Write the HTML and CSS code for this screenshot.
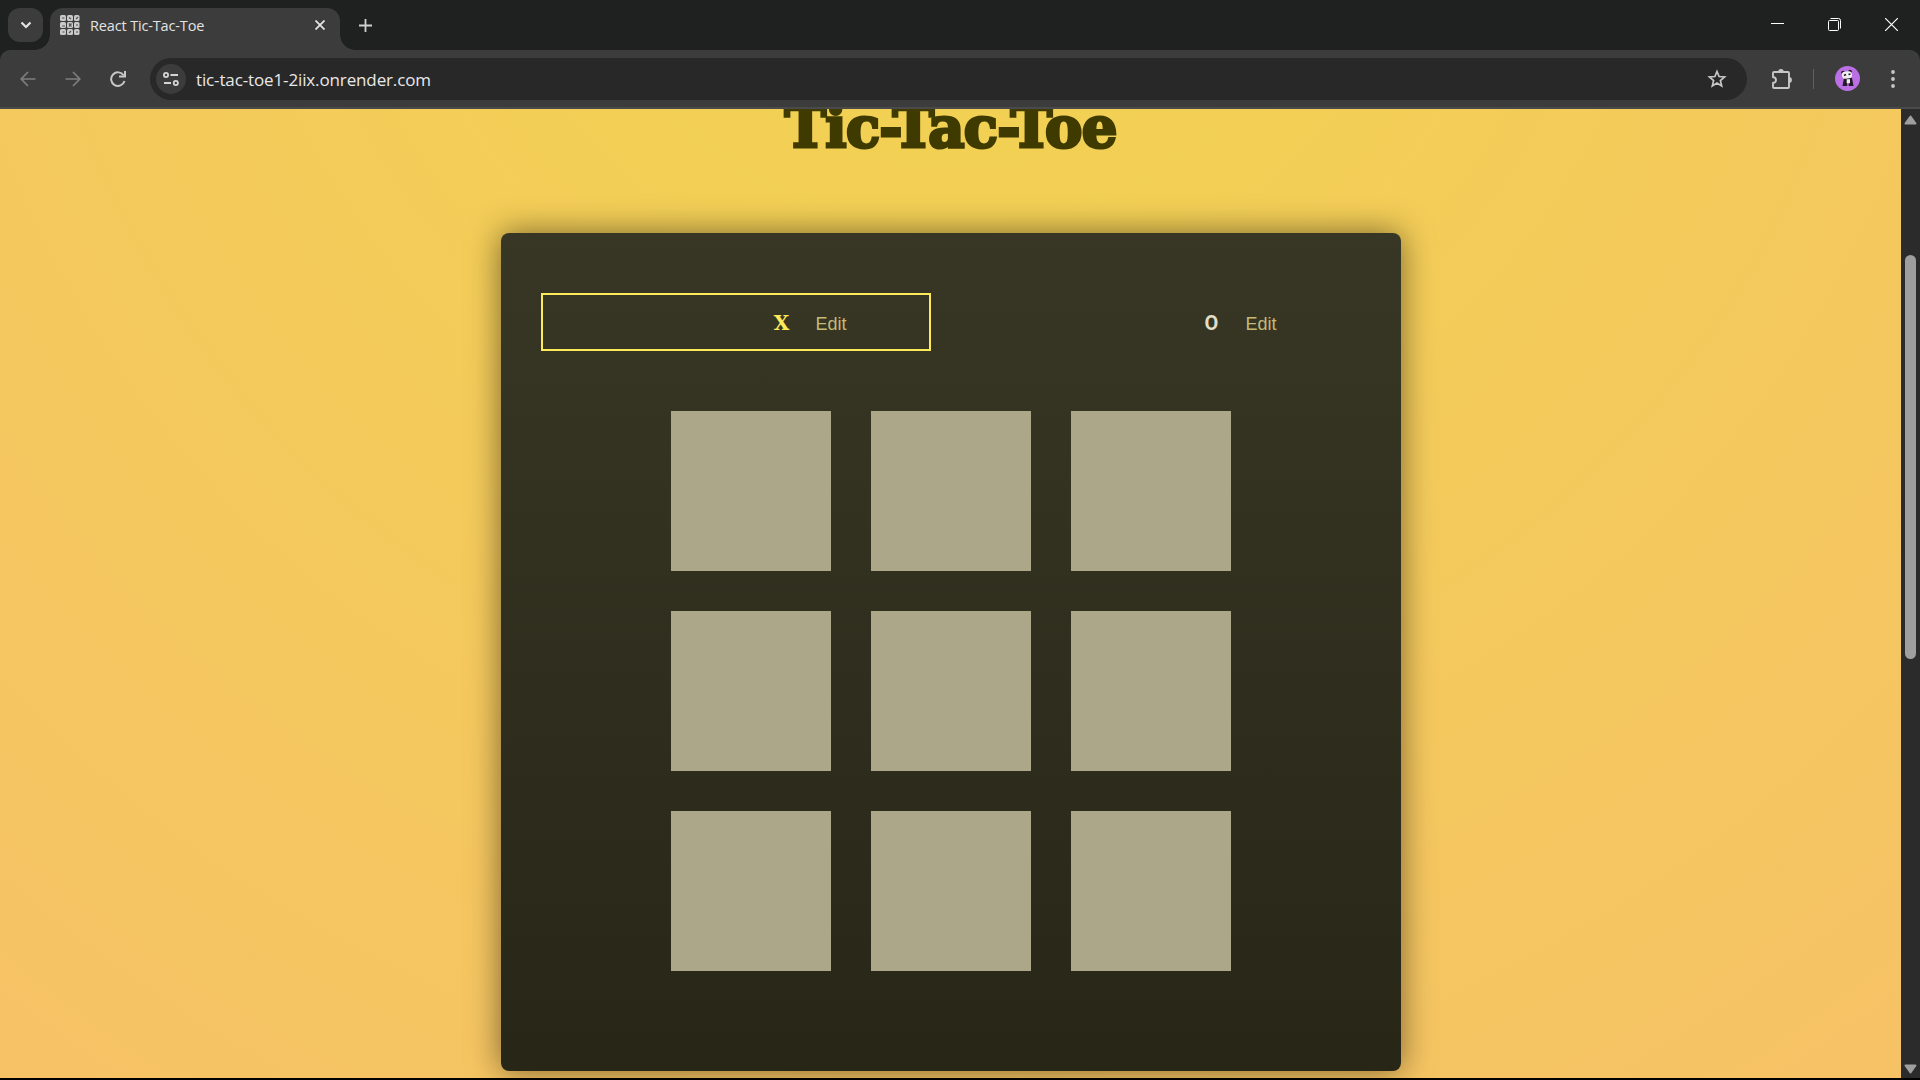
FILE: index.html
```html
<!DOCTYPE html>
<html lang="en">
<head>
<meta charset="utf-8">
<title>React Tic-Tac-Toe</title>
<link rel="stylesheet" href="styles.css">
</head>
<body>
<div class="browser">
  <header class="tabs">
    <button class="tab-search" aria-label="Search tabs"><svg width="12" height="8" viewBox="0 0 12 8"><path d="M1.500 1.500 6 6l4.500-4.500" stroke="#e3e3e3" stroke-width="2.200" fill="none"/></svg></button>
    <div class="tab">
      <svg class="favicon" width="20" height="20" viewBox="0 0 20 20">
        <g fill="#c9c9c9"><rect x="0" y="0" width="6" height="6" rx="1.500"/><rect x="7" y="0" width="6" height="6" rx="1.500"/><rect x="14" y="0" width="5.500" height="6" rx="1.500"/><rect x="0" y="7" width="6" height="6" rx="1.500"/><rect x="7" y="7" width="6" height="6" rx="1.500"/><rect x="14" y="7" width="5.500" height="6" rx="1.500"/><rect x="0" y="14" width="6" height="6" rx="1.500"/><rect x="7" y="14" width="6" height="6" rx="1.500"/><rect x="14" y="14" width="5.500" height="6" rx="1.500"/></g>
        <path d="M2 3h2.500M9 2.500l2 1.500M16 4l2-2M2 11h3M9 8.500l2.500 3m0-3-2.500 3M16 10h2M2.500 17h2M9 18l2-2M16 17h2" stroke="#555" stroke-width="1.200"/>
      </svg>
      <span class="tab-title">React Tic-Tac-Toe</span>
      <svg class="tab-close" width="10" height="10" viewBox="0 0 10 10"><path d="m.5.5 9 9m0-9-9 9" stroke="#e3e3e3" stroke-width="1.800"/></svg>
    </div>
    <svg class="new-tab" width="13" height="13" viewBox="0 0 13 13"><path d="M6.500 0v13M0 6.500h13" stroke="#d0d0d0" stroke-width="1.800"/></svg>
    <div class="window-controls">
      <svg width="13" height="13" viewBox="0 0 13 13"><path d="M0 5.500h13" stroke="#fff"/></svg>
      <svg width="13" height="13" viewBox="0 0 13 13" fill="none" stroke="#fff"><path d="M2.500.5h8a2 2 0 0 1 2 2v8"/><rect x=".5" y="2.500" width="10" height="10" rx="1"/></svg>
      <svg width="13" height="13" viewBox="0 0 13 13"><path d="m0 0 13 13M13 0 0 13" stroke="#fff" stroke-width="1.200"/></svg>
    </div>
  </header>
  <nav class="toolbar">
    <svg class="back" width="16" height="16" viewBox="0 0 16 16" fill="none" stroke="#7e7e7e" stroke-width="1.700"><path d="M15.500 8H1.500M8 1 1.200 8 8 15"/></svg>
    <svg class="forward" width="16" height="16" viewBox="0 0 16 16" fill="none" stroke="#7e7e7e" stroke-width="1.700"><path d="M.5 8h14M8 1l6.800 7L8 15"/></svg>
    <svg class="reload" width="16" height="16" viewBox="0 0 16 16" fill="none" stroke="#c7c7c7" stroke-width="2"><path d="M14.500 10a6.800 6.800 0 1 1-.8-5.500"/><path d="M15 0v5.500H9"/></svg>
    <div class="address">
      <span class="site-info"><svg width="16" height="14" viewBox="0 0 16 14" fill="none" stroke="#d5d5d5" stroke-width="1.800"><circle cx="3" cy="3" r="2.100"/><path d="M7.500 3H15M1 11h7"/><circle cx="12.800" cy="11" r="2.100"/></svg></span>
      <span class="url">tic-tac-toe1-2iix.onrender.com</span>
      <svg class="star" width="20" height="20" viewBox="0 0 20 20" fill="none" stroke="#c7c7c7" stroke-width="1.700"><path d="m10 2.500 2.100 5 5.500.5-4.200 3.600 1.300 5.400L10 14.100 5.300 17l1.300-5.400L2.400 8l5.500-.5z"/></svg>
    </div>
    <svg class="extensions" width="22" height="22" viewBox="0 0 22 22"><path d="M3 4h14a1 1 0 0 1 1 1v14a1 1 0 0 1-1 1H3a1 1 0 0 1-1-1v-4c4-.5 4-5.500 0-6V5a1 1 0 0 1 1-1z" fill="none" stroke="#c7c7c7" stroke-width="1.900"/><path d="M7 4a2.900 2.900 0 0 1 5.800 0M18 9a2.900 2.900 0 0 1 0 5.800" fill="#c7c7c7"/></svg>
    <span class="divider"></span>
    <svg class="avatar" width="25" height="25" viewBox="0 0 25 25"><circle cx="12.500" cy="12.500" r="12.500" fill="#ba70e4"/><g fill="#221a26"><circle cx="8" cy="6.500" r="1.800"/><circle cx="15" cy="5.500" r="1.800"/><path d="M9 12h8l1.500 8h-4.800v-4h-1.500v4H7.500z"/></g><rect x="7" y="5.500" width="10" height="7" rx="3" fill="#f2eff2" transform="rotate(-8 12 9)"/><path d="m9 9.500 2-1m2.500 0 2-.5" stroke="#221a26" stroke-width="1.400"/><rect x="11.700" y="13.200" width="3.300" height="4" fill="#eee"/></svg>
    <svg class="menu" width="4" height="18" viewBox="0 0 4 18" fill="#c7c7c7"><circle cx="2" cy="2" r="1.900"/><circle cx="2" cy="9" r="1.900"/><circle cx="2" cy="16" r="1.900"/></svg>
  </nav>
  <div class="viewport">
    <main class="page">
      <h1 class="title"><span class="title-text">Tic-Tac-Toe</span></h1>
      <section class="game">
        <ol class="players">
          <li class="player active"><span class="symbol cross">X</span><button class="edit">Edit</button></li>
          <li class="player"><span class="symbol nought">O</span><button class="edit">Edit</button></li>
        </ol>
        <div class="board">
          <button class="square"></button><button class="square"></button><button class="square"></button>
          <button class="square"></button><button class="square"></button><button class="square"></button>
          <button class="square"></button><button class="square"></button><button class="square"></button>
        </div>
      </section>
    </main>
    <aside class="scrollbar">
      <svg width="13" height="10" viewBox="0 0 13 10"><path d="M6.500 1.500 11.500 8.500h-10z" fill="#9f9f9f" stroke="#9f9f9f" stroke-width="2" stroke-linejoin="round"/></svg>
      <span class="thumb"></span>
      <svg class="down" width="13" height="10" viewBox="0 0 13 10"><path d="M6.500 8.500 11.500 1.500h-10z" fill="#9f9f9f" stroke="#9f9f9f" stroke-width="2" stroke-linejoin="round"/></svg>
    </aside>
  </div>
</div>
</body>
</html>
```
FILE: styles.css
```css
* { box-sizing: border-box; }
body { margin: 0; background: #000; overflow: hidden; }
svg { display: block; flex: none; }
button { border: 0; padding: 0; background: none; }
.browser { width: 1920px; height: 1080px; display: flex; flex-direction: column; border-bottom: 2px solid #000; font-family: "Open Sans", "Noto Sans", sans-serif; background: #1f2120; }

.tabs { height: 50px; flex: none; display: flex; padding-left: 8px; }
.tab-search { width: 35px; height: 34px; margin: 8px 7px 0 0; border-radius: 12px; background: #3c3c3c; display: grid; place-items: center; }
.tab { position: relative; width: 290px; height: 42px; margin-top: 8px; padding: 0 15px 8px 10px; border-radius: 13px 13px 0 0; background: #3c3c3c; display: flex; align-items: center; }
.tab::before, .tab::after { content: ""; position: absolute; bottom: 0; width: 15px; height: 15px; }
.tab::before { left: -15px; background: radial-gradient(circle at 0 0, transparent 14.5px, #3c3c3c 15px); }
.tab::after { right: -15px; background: radial-gradient(circle at 100% 0, transparent 14.5px, #3c3c3c 15px); }
.tab-title { margin-left: 10px; color: #e3e3e3; font-size: 14.5px; letter-spacing: -0.15px; white-space: nowrap; }
.tab-close { margin-left: auto; }
.new-tab { margin: 19px 0 0 19px; }
.window-controls { margin: 18px 22px 0 auto; display: flex; gap: 44px; }

.toolbar { height: 59px; flex: none; display: flex; align-items: center; padding: 0 25px 0 20px; background: #3c3c3c; border-bottom: 2px solid #4a4a4a; border-radius: 10px 10px 0 0; }
.forward { margin-left: 29px; }
.reload { margin-left: 29px; }
.address { width: 1597px; height: 42px; margin-left: 24px; padding: 0 20px 0 6px; border-radius: 21px; background: #282828; display: flex; align-items: center; flex: none; }
.site-info { width: 30px; height: 30px; border-radius: 50%; background: #3c3c3c; display: grid; place-items: center; }
.url { margin: 1px 0 0 10px; color: #e8e8e8; font-size: 17px; letter-spacing: -0.13px; white-space: nowrap; }
.star { margin-left: auto; }
.extensions { margin-left: 24px; }
.divider { width: 2px; height: 20px; margin-left: 20px; background: #606060; }
.avatar { margin-left: 21px; }
.menu { margin-left: 31px; }

.viewport { flex: 1; min-height: 0; display: flex; }
.page { flex: 1; overflow: hidden; display: flex; flex-direction: column; align-items: center; background: radial-gradient(circle 2350px at 50% -305px, #f1d44f, #f9b971); }
.title { width: 900px; height: 124px; flex: none; margin: 0; display: flex; justify-content: center; color: #3f3b00; font: bold 56px/56px "DejaVu Serif", serif; white-space: nowrap; }
.title-text { margin-top: -10px; letter-spacing: -0.7px; -webkit-text-stroke: 3px #3f3b00; }
.game { width: 900px; height: 838px; flex: none; padding: 60px 40px 0; border-radius: 8px; background: linear-gradient(#383624, #282617); box-shadow: 0 0 32px rgba(0, 0, 0, .5); }
.players { margin: 0 0 60px; padding: 0; display: flex; gap: 40px; list-style: none; }
.player { width: 390px; height: 58px; border: 2px solid transparent; padding: 2px 82px 0 0; display: flex; align-items: center; justify-content: flex-end; gap: 25px; color: #e1dec7; }
.player.active { border-color: #fcea59; color: #fcea59; }
.symbol { width: 18px; text-align: center; font-weight: bold; font-size: 20px; line-height: 24px; }
.cross { font-family: "DejaVu Serif", serif; }
.nought { font-family: Roboto, sans-serif; }
.edit { padding-top: 2px; color: #c3ba78; font: 18px/24px "Liberation Sans", sans-serif; }
.board { display: grid; grid-template-columns: repeat(3, 160px); gap: 40px; justify-content: center; }
.square { height: 160px; background: #aca788; }

.scrollbar { width: 19px; flex: none; display: flex; flex-direction: column; align-items: center; padding: 6px 0 4px; background: #2b2b2b; }
.thumb { width: 11px; height: 404px; margin-top: 130px; border-radius: 6px; background: #9f9f9f; }
.down { margin-top: auto; }
```
